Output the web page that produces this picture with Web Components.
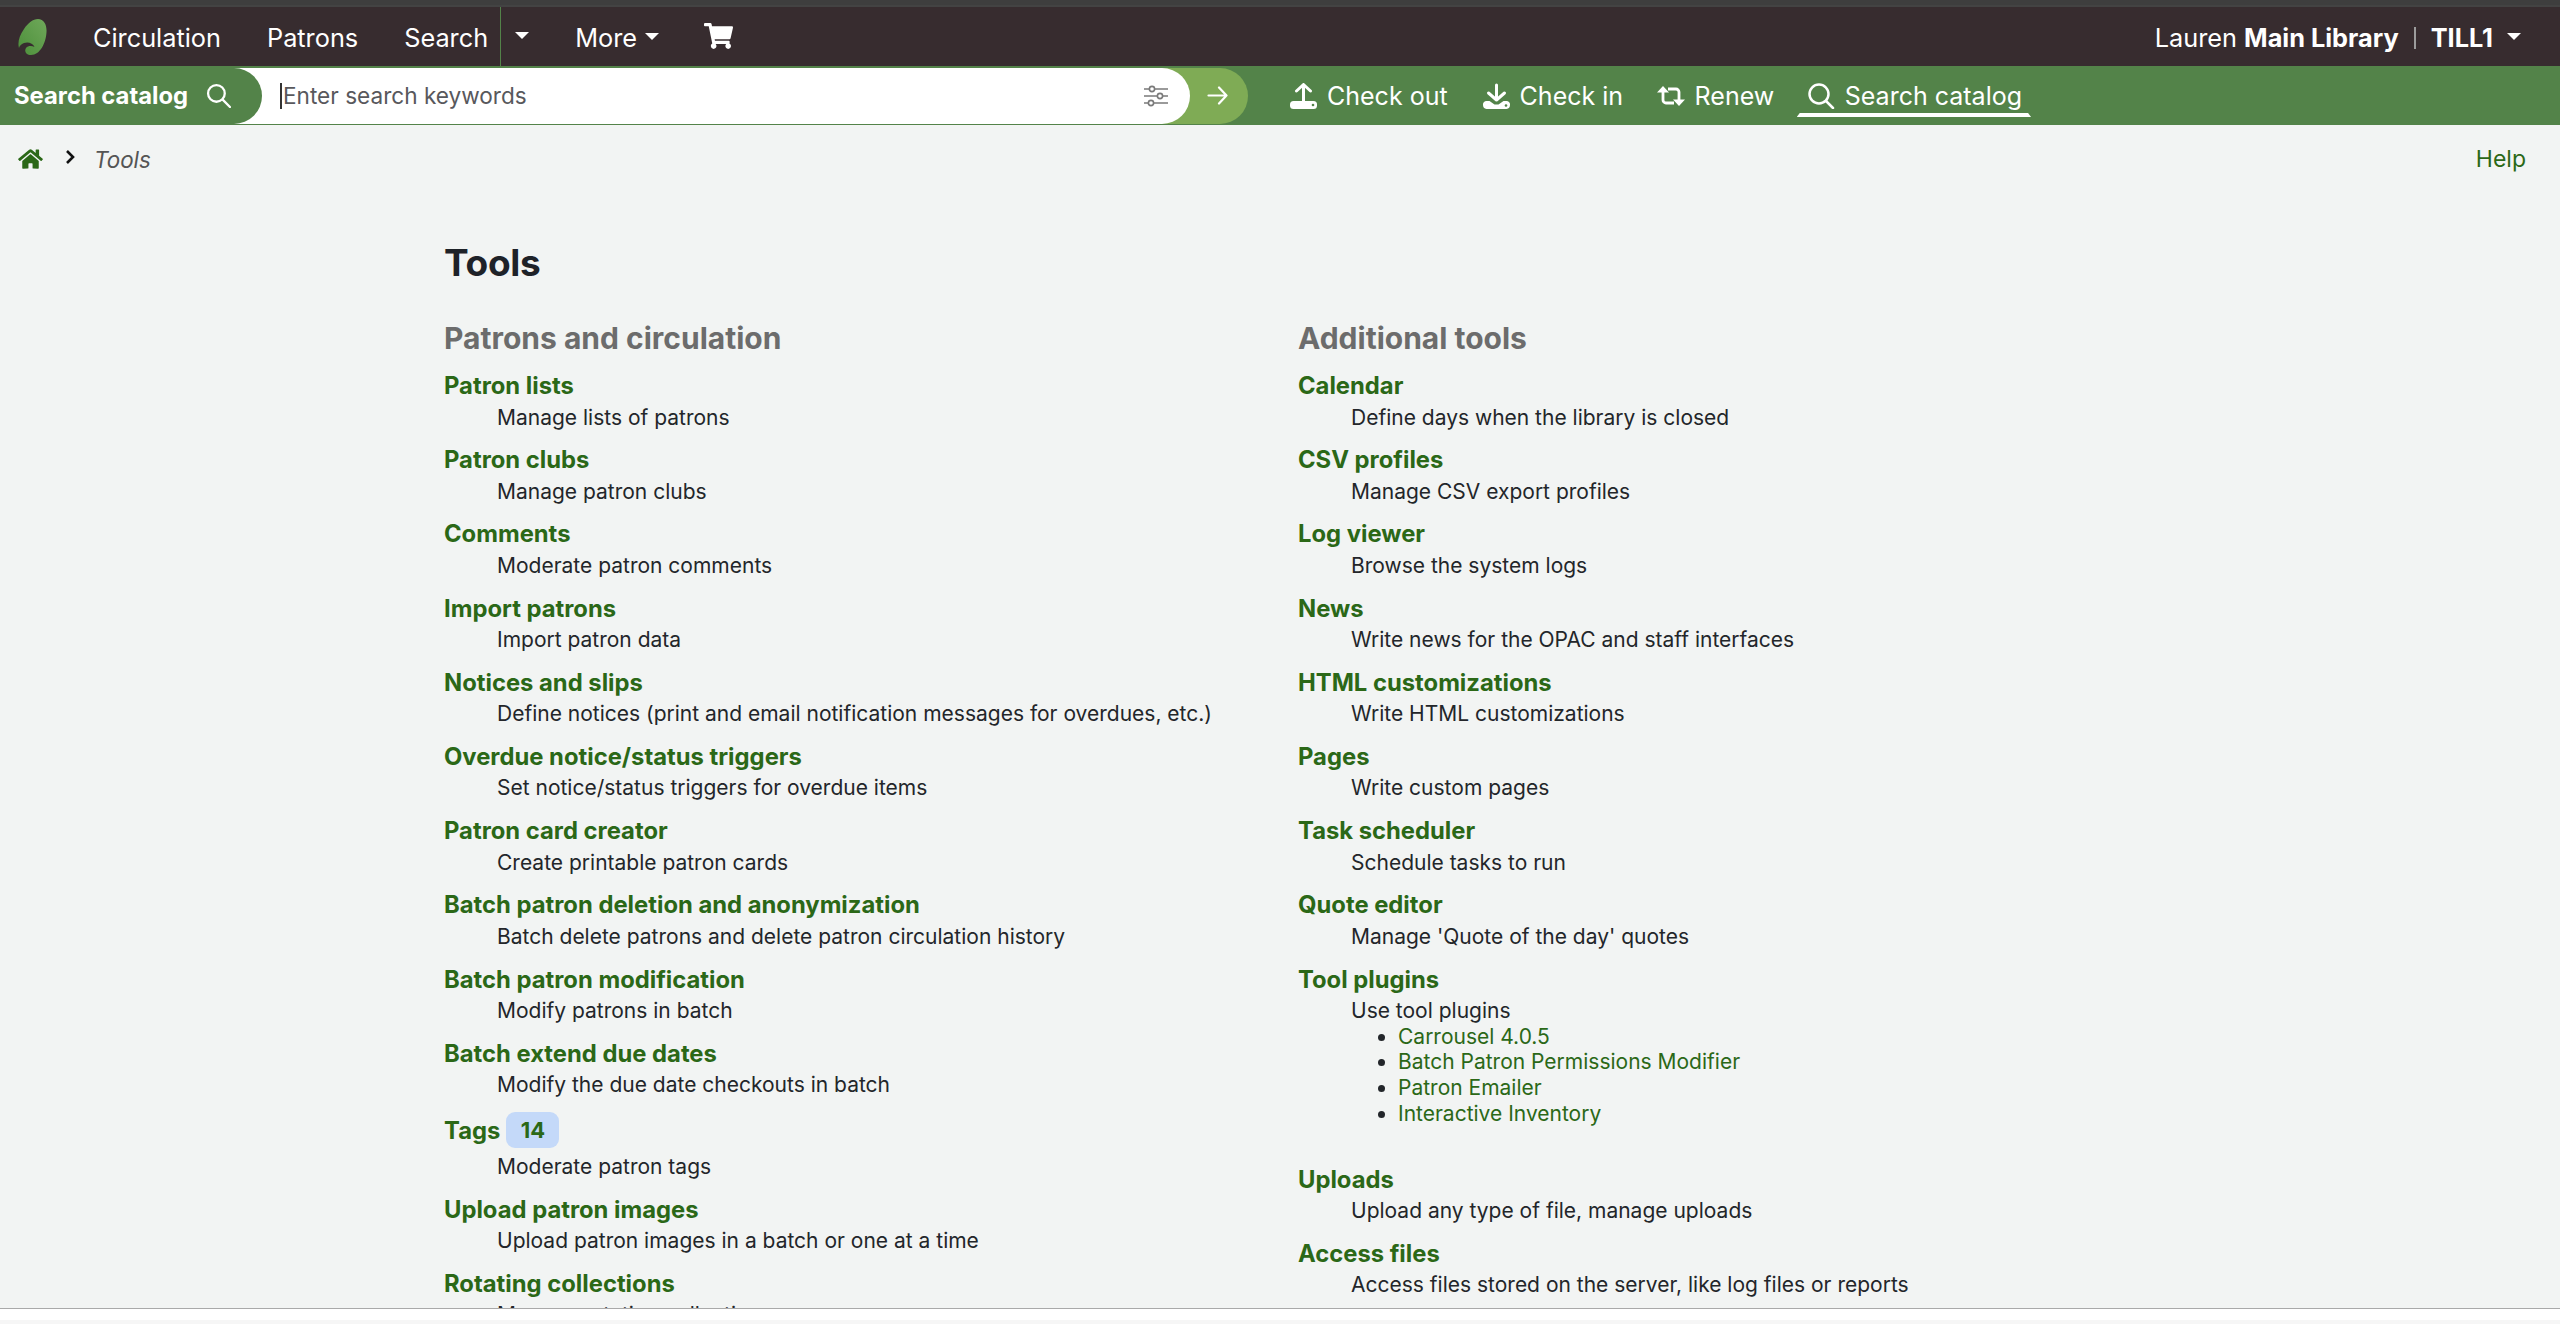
<!DOCTYPE html>
<html lang="en"><head><meta charset="utf-8"><title>Tools</title>
<style>
html,body{margin:0;padding:0;height:100%;background:#fff}
body{font-family:Inter,"Noto Sans",sans-serif;overflow:hidden}
</style></head>
<body>
<koha-app>
  <koha-navbar></koha-navbar>
  <koha-searchbar></koha-searchbar>
  <koha-breadcrumb></koha-breadcrumb>
  <koha-tools></koha-tools>
</koha-app>
<script>
const CSS_LINK='#2b6817';
class KohaApp extends HTMLElement{constructor(){super();this.attachShadow({mode:'open'}).innerHTML=`<style>
:host{display:flex;flex-direction:column;height:1324px;background:#f2f4f3;overflow:hidden}
.top{height:7px;background:#3e3e3e;flex:none;border-bottom:2px solid #434343;box-sizing:border-box}
.page{flex:1;min-height:0;overflow:hidden}
.foot{flex:none;height:16px;background:#fff;border-top:1px solid #a9a9a9;box-sizing:border-box}
.foot::after{content:"";display:block;height:4px;margin-top:11px;background:#f6f6f6}
</style><div class="top"></div><div class="page"><slot></slot></div><div class="foot"></div>`;}}
customElements.define('koha-app',KohaApp);

class KohaNavbar extends HTMLElement{constructor(){super();this.attachShadow({mode:'open'}).innerHTML=`<style>
:host{display:flex;align-items:center;height:59px;box-sizing:border-box;padding:2px 39px 0 18px;background:#372c2f;color:#fff;font-size:25.3px}
a{color:#fff;display:block}
.logo{width:29px;height:36px;margin-right:46px;flex:none;margin-top:-2px}
.main{display:flex;align-items:center;gap:46px;align-self:stretch}
.search{display:flex;align-items:center;align-self:stretch;margin-top:-2px}
.split{align-self:stretch;width:1px;background:#538349;margin-left:12px}
.caret{width:0;height:0;border-left:7px solid transparent;border-right:7px solid transparent;border-top:7px solid #fff;display:inline-block;flex:none;margin-top:-3px}
.more{display:flex;align-items:center;gap:8px;margin-left:46px}
.cart{width:29px;height:26px;fill:#fff;margin-left:44.5px;display:block;margin-top:-3px}
.right{margin-left:auto;display:flex;align-items:center}
b{font-weight:700}
.sep{margin:0 15px;width:2px;height:22px;background:#9c9c9c}
</style>
<svg class="logo" viewBox="0 0 29 36"><defs><linearGradient id="l" x1="0" y1="1" x2="1" y2="0"><stop offset="0" stop-color="#4c8f3a"/><stop offset="1" stop-color="#6fa85a"/></linearGradient></defs>
<path fill="url(#l)" d="M20 0C26 0 29 6 28.5 13C28 24 22 36 13 36C8 36 6 32 8 29C10 26.5 14 26.5 16.5 28C15 24 10 22.5 6 24C3 25 1.5 27 1 29C-.5 24 1 17 6 10C10 4 15 0 20 0Z"/></svg>
<div class="main"><a style="align-self:center">Circulation</a><a style="align-self:center">Patrons</a><div class="search"><a style="padding-top:2px">Search</a><span class="split"></span><span class="caret" style="margin-left:14px"></span></div></div>
<div class="more"><a>More</a><span class="caret"></span></div>
<svg class="cart" viewBox="0 0 576 512"><path d="M528.12 301.319l47.273-208C578.806 78.301 567.391 64 551.99 64H159.208l-9.166-44.81C147.758 8.021 137.93 0 126.529 0H24C10.745 0 0 10.745 0 24v16c0 13.255 10.745 24 24 24h69.883l70.248 343.435C147.325 417.1 136 435.222 136 456c0 30.928 25.072 56 56 56s56-25.072 56-56c0-15.674-6.447-29.835-16.824-40h209.647C430.447 426.165 424 440.326 424 456c0 30.928 25.072 56 56 56s56-25.072 56-56c0-22.172-12.888-41.332-31.579-50.405l5.517-24.276c3.413-15.018-8.002-29.319-23.403-29.319H218.117l-6.545-32h293.145c11.206 0 20.92-7.754 23.403-18.681z"/></svg>
<div class="right"><span>Lauren</span>&nbsp;<b>Main Library</b><span class="sep"></span><b>TILL1</b><span class="caret" style="margin-left:14px"></span></div>`;}}
customElements.define('koha-navbar',KohaNavbar);

class KohaSearchbar extends HTMLElement{constructor(){super();this.attachShadow({mode:'open'}).innerHTML=`<style>
:host{display:flex;align-items:center;height:59px;background:#538349;color:#fff;font-size:25px}
svg{display:block;flex:none}
.group{display:flex;height:56px}
.tab{width:262px;box-sizing:border-box;padding-left:14px;background:#538349;border-radius:0 28px 28px 0;display:flex;align-items:center;gap:18px;font-weight:700;font-size:23.8px;position:relative;z-index:2;flex:none}
.input{width:956px;margin-left:-28px;padding-left:46px;box-sizing:border-box;background:#fff;border-radius:0 28px 28px 0;display:flex;align-items:center;color:#58585c;font-size:22.6px;position:relative;z-index:1;padding-right:22px}
.cur{width:2px;height:26px;background:#333;margin-right:1px}
.go{width:86px;margin-left:-28px;padding:0 4px 0 28px;box-sizing:border-box;background:#7fab55;border-radius:0 28px 28px 0;display:flex;align-items:center;justify-content:center;flex:none}
.links{display:flex;align-items:center;margin-left:42px;height:100%}
.l{display:flex;align-items:center;gap:10px;position:relative;height:100%;margin-right:33.5px;white-space:nowrap}
.l:first-child{margin-right:35px}
.l.on::after{content:"";position:absolute;left:-11px;right:-9px;bottom:8px;height:4px;background:#fff;clip-path:polygon(3px 0,calc(100% - 3px) 0,100% 100%,0 100%)}
</style>
<div class="group">
<div class="tab"><span>Search catalog</span><svg width="25" height="25" viewBox="0 0 24 24" fill="none" stroke="#fff" stroke-width="2.2" stroke-linecap="round"><circle cx="10" cy="10" r="8"/><path d="M16 16l7 7"/></svg></div>
<div class="input"><span class="cur"></span><span style="flex:1">Enter search keywords</span>
<svg width="24" height="24" viewBox="0 0 24 24" fill="none" stroke="#7a7a7a" stroke-width="1.7"><path d="M0 5h24M0 12h24M0 19h24"/><g fill="#fff" stroke-width="1.6"><circle cx="8" cy="5" r="2.6"/><circle cx="16" cy="12" r="2.6"/><circle cx="7" cy="19" r="2.6"/></g></svg></div>
<div class="go"><svg width="21" height="19" viewBox="0 0 21 19" fill="none" stroke="#fff" stroke-width="2.2" stroke-linecap="round" stroke-linejoin="round"><path d="M1.5 9.5h18M12 1.5l7.5 8-7.5 8"/></svg></div>
</div>
<div class="links">
<div class="l"><svg width="27" height="26" viewBox="0 0 27 26"><path fill="none" stroke="#fff" stroke-width="3" stroke-linecap="round" stroke-linejoin="round" d="M6.5 8L13.5 1.5L20.5 8M13.5 2V21"/><rect x="0" y="18" width="27" height="8" rx="3.5" fill="#fff"/><circle cx="23" cy="22" r="1.3" fill="#538349"/></svg><span>Check out</span></div>
<div class="l"><svg width="27" height="26" viewBox="0 0 27 26"><path fill="none" stroke="#fff" stroke-width="3" stroke-linecap="round" stroke-linejoin="round" d="M5.5 10L13.5 17L21.5 10M13.5 2V17"/><path fill="#fff" d="M3.5 18h3l5 3.5h4l5-3.5h3a3.5 3.5 0 0 1 3.5 4a4 4 0 0 1-3.5 4H3.5a4 4 0 0 1-3.5-4a3.5 3.5 0 0 1 3.5-4z"/><circle cx="23" cy="22.5" r="1.3" fill="#538349"/></svg><span>Check in</span></div>
<div class="l"><svg width="28" height="20" viewBox="0 0 28 20" fill="none" stroke="#fff" stroke-width="2.8" stroke-linejoin="round"><path d="M6 5v9a3 3 0 0 0 3 3h8M22 15V6a3 3 0 0 0-3-3h-8"/><path fill="#fff" stroke="none" d="M6 0l6 6.5H0zM22 20l-6-6.5h12z"/></svg><span>Renew</span></div>
<div class="l on"><svg width="27" height="26" viewBox="0 0 27 26" fill="none" stroke="#fff" stroke-width="2.5" stroke-linecap="round"><circle cx="11" cy="11" r="9.5"/><path d="M18 18l7 7"/></svg><span>Search catalog</span></div>
</div>`;}}
customElements.define('koha-searchbar',KohaSearchbar);

class KohaBreadcrumb extends HTMLElement{constructor(){super();this.attachShadow({mode:'open'}).innerHTML=`<style>
:host{display:flex;align-items:center;height:68px;padding:0 34px 0 18px;font-size:22.4px;color:#555}
svg{display:block;flex:none}
i{margin-left:19px}
a{margin-left:auto;color:${CSS_LINK};font-size:23px}
</style>
<svg width="25" height="22" viewBox="0 0 576 512" fill="${CSS_LINK}"><path d="M280.37 148.26L96 300.11V464a16 16 0 0 0 16 16l112.06-.29a16 16 0 0 0 15.92-16V368a16 16 0 0 1 16-16h64a16 16 0 0 1 16 16v95.64a16 16 0 0 0 16 16.05L464 480a16 16 0 0 0 16-16V300L295.67 148.26a12.19 12.19 0 0 0-15.3 0zM571.6 251.47L488 182.56V44.05a12 12 0 0 0-12-12h-56a12 12 0 0 0-12 12v72.61L318.47 43a48 48 0 0 0-61 0L4.34 251.47a12 12 0 0 0-1.6 16.9l25.5 31A12 12 0 0 0 45.15 301l235.22-193.74a12.19 12.19 0 0 1 15.3 0L530.9 301a12 12 0 0 0 16.9-1.6l25.5-31a12 12 0 0 0-1.7-16.93z"/></svg>
<svg style="margin-left:22px;margin-top:-4px" width="10" height="14" viewBox="0 0 10 14" fill="none" stroke="#111" stroke-width="2.6"><path d="M2 1l6 6-6 6"/></svg>
<i>Tools</i><a>Help</a>`;}}
customElements.define('koha-breadcrumb',KohaBreadcrumb);

class KohaItem extends HTMLElement{
 constructor(){super();this.attachShadow({mode:'open'});}
 connectedCallback(){const n=this.getAttribute('name'),d=this.getAttribute('desc'),b=this.getAttribute('badge');
 this.shadowRoot.innerHTML=`<style>
:host{display:block}
.dt{font-weight:700;font-size:23.8px;line-height:33px;color:${CSS_LINK};display:flex;align-items:center;box-sizing:border-box;height:32px;padding-top:2px}
.dt.has{height:39.5px;padding-top:0}
.badge{display:inline-flex;align-items:center;justify-content:center;width:53px;height:36px;margin-left:6px;border-radius:9px;background:#c4d9f9;font-size:22px}
.dd{font-size:21px;line-height:33px;margin-left:53px;color:#23262a;padding-bottom:9.2px}
</style><div class="dt ${b?'has':''}">${n}${b?`<span class="badge">${b}</span>`:''}</div><div class="dd">${d}<slot></slot></div>`;}
}
customElements.define('koha-item',KohaItem);

class KohaPlugins extends HTMLElement{constructor(){super();this.attachShadow({mode:'open'}).innerHTML=`<style>
:host{display:block;margin-top:-3.5px;margin-bottom:26.5px}
ul{margin:0;padding:0 0 0 47px;font-size:21px;line-height:25.7px;color:#23262a}
a{color:${CSS_LINK}}
</style><ul><li><a>Carrousel 4.0.5</a></li><li><a>Batch Patron Permissions Modifier</a></li><li><a>Patron Emailer</a></li><li><a>Interactive Inventory</a></li></ul>`;}}
customElements.define('koha-plugins',KohaPlugins);

class KohaTools extends HTMLElement{constructor(){super();
const left=[['Patron lists','Manage lists of patrons'],['Patron clubs','Manage patron clubs'],['Comments','Moderate patron comments'],['Import patrons','Import patron data'],['Notices and slips','Define notices (print and email notification messages for overdues, etc.)'],['Overdue notice/status triggers','Set notice/status triggers for overdue items'],['Patron card creator','Create printable patron cards'],['Batch patron deletion and anonymization','Batch delete patrons and delete patron circulation history'],['Batch patron modification','Modify patrons in batch'],['Batch extend due dates','Modify the due date checkouts in batch'],['Tags','Moderate patron tags','14'],['Upload patron images','Upload patron images in a batch or one at a time'],['Rotating collections','Manage rotating collections']];
const right=[['Calendar','Define days when the library is closed'],['CSV profiles','Manage CSV export profiles'],['Log viewer','Browse the system logs'],['News','Write news for the OPAC and staff interfaces'],['HTML customizations','Write HTML customizations'],['Pages','Write custom pages'],['Task scheduler','Schedule tasks to run'],['Quote editor',"Manage 'Quote of the day' quotes"],['Tool plugins','Use tool plugins',null,1],['Uploads','Upload any type of file, manage uploads'],['Access files','Access files stored on the server, like log files or reports']];
const r=a=>a.map(([n,d,b,p])=>`<koha-item name="${n}" desc="${d.replace(/'/g,'&#39;')}"${b?` badge="${b}"`:''}>${p?'<koha-plugins></koha-plugins>':''}</koha-item>`).join('');
this.attachShadow({mode:'open'}).innerHTML=`<style>
:host{display:block;padding:48px 0 0 444px}
h1{margin:0 0 35px;font-size:37px;line-height:44px;font-weight:700;color:#1e2228;letter-spacing:-.3px}
.cols{display:grid;grid-template-columns:854px 854px}
h2{margin:0 0 12.5px;font-size:30px;line-height:36px;font-weight:700;color:#6c6c6c}
</style><h1>Tools</h1><div class="cols"><section><h2>Patrons and circulation</h2>${r(left)}</section><section><h2>Additional tools</h2>${r(right)}</section></div>`;}}
customElements.define('koha-tools',KohaTools);
</script>
</body></html>
